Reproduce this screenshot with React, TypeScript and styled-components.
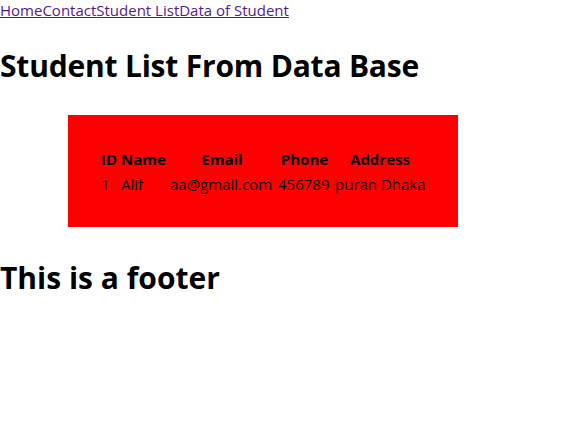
import React from "react";
import styled, { createGlobalStyle } from "styled-components";

const Global = createGlobalStyle`
  body {
    margin: 0;
    font-family: "Open Sans", "Noto Sans", sans-serif;
    background: #fff;
    color: #000;
  }
`;

const Nav = styled.nav`
  font-size: 15px;
  line-height: 21px;
  height: 21px;
`;

const NavLink = styled.a`
  color: #551a8b;
  text-decoration: underline;
`;

const Heading = styled.h1`
  font-size: 30px;
  font-weight: 700;
  line-height: 42px;
  margin: 24px 0 0 0;
  letter-spacing: -0.2px;
`;

const RedBox = styled.div`
  background: #ff0000;
  width: 390px;
  height: 112px;
  margin: 28px 0 0 68px;
  box-sizing: border-box;
  padding: 31px 0 0 30px;
`;

const Table = styled.table`
  table-layout: fixed;
  border-spacing: 2px;
  width: 330px;
  font-size: 15px;
`;

const Th = styled.th<{ $w: number; $align?: string }>`
  width: ${(p) => p.$w}px;
  padding: 1px;
  line-height: 21px;
  font-weight: 700;
  text-align: ${(p) => p.$align ?? "center"};
  white-space: nowrap;
`;

const Td = styled.td`
  padding: 1px;
  line-height: 21px;
  white-space: nowrap;
`;

const Footer = styled(Heading)`
  margin-top: 30px;
  letter-spacing: 0;
`;

export default function App() {
  return (
    <>
      <Global />
      <Nav>
        <NavLink href="#">Home</NavLink>
        <NavLink href="#">Contact</NavLink>
        <NavLink href="#">Student List</NavLink>
        <NavLink href="#">Data of Student</NavLink>
      </Nav>
      <Heading>Student List From Data Base</Heading>
      <RedBox>
        <Table>
          <thead>
            <tr>
              <Th $w={16} $align="left">ID</Th>
              <Th $w={45} $align="left">Name</Th>
              <Th $w={104}>Email</Th>
              <Th $w={53}>Phone</Th>
              <Th $w={90}>Address</Th>
            </tr>
          </thead>
          <tbody>
            <tr>
              <Td>1</Td>
              <Td>Alif</Td>
              <Td>aa@gmail.com</Td>
              <Td>456789</Td>
              <Td>puran Dhaka</Td>
            </tr>
          </tbody>
        </Table>
      </RedBox>
      <Footer>This is a footer</Footer>
    </>
  );
}
